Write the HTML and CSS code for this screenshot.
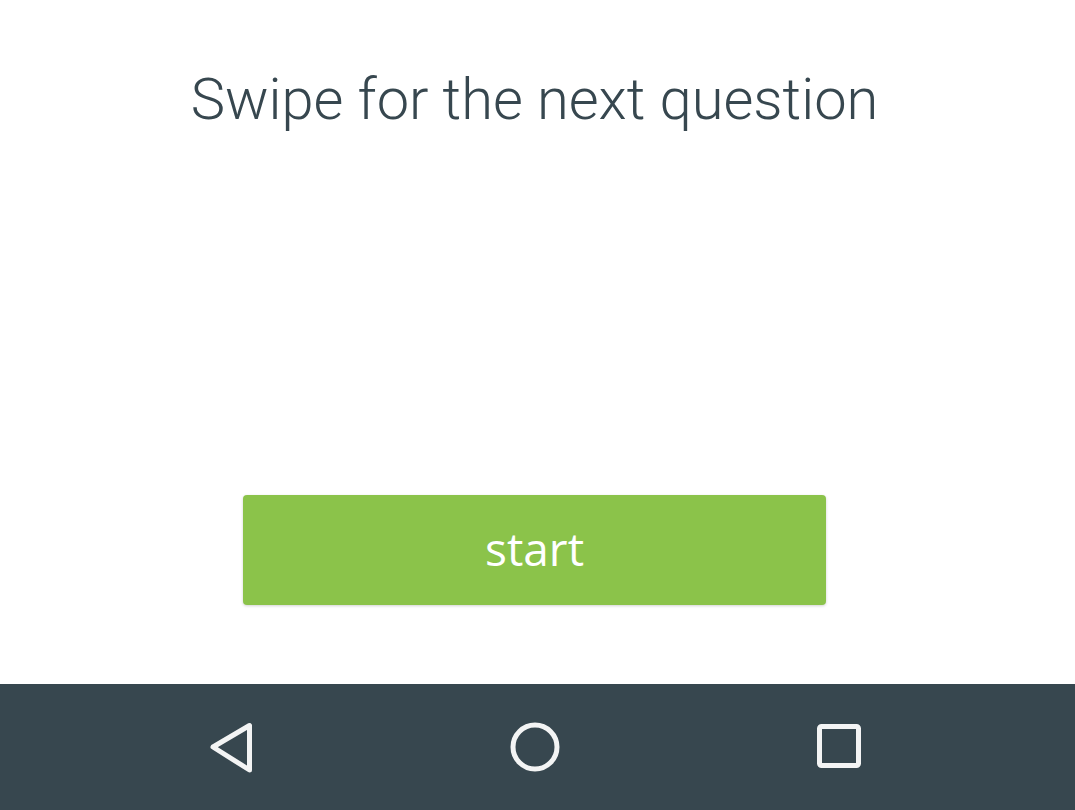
FILE: index.html
```html
<!DOCTYPE html>
<html>
<head>
<meta charset="utf-8">
<link rel="stylesheet" href="styles.css">
</head>
<body>
<div class="screen">
  <main class="content">
    <h1 class="title">Swipe for the next question</h1>
    <div class="spacer"></div>
    <button class="start">start</button>
  </main>
  <nav class="navbar">
    <svg class="nav-icon" width="60" height="60" viewBox="0 0 60 60">
      <path d="M48.5 8.5 L48.5 53 L12 30 Z" fill="none" stroke="#f3f4f4" stroke-width="5" stroke-linejoin="round"/>
    </svg>
    <svg class="nav-icon" width="60" height="60" viewBox="0 0 60 60">
      <circle cx="30" cy="30" r="22" fill="none" stroke="#f3f4f4" stroke-width="5"/>
    </svg>
    <svg class="nav-icon" width="60" height="60" viewBox="0 0 60 60">
      <rect x="10.5" y="9.5" width="39" height="39" rx="2" fill="none" stroke="#f3f4f4" stroke-width="5"/>
    </svg>
  </nav>
</div>
</body>
</html>
```

FILE: styles.css
```css
html, body {
  margin: 0;
  padding: 0;
  background: #ffffff;
}
.screen {
  width: 1075px;
  height: 810px;
  display: flex;
  flex-direction: column;
  overflow: hidden;
}
.content {
  flex: 1;
  display: flex;
  flex-direction: column;
  align-items: center;
  padding-top: 60px;
  padding-bottom: 79px;
}
.title {
  margin: 0;
  margin-left: -6px;
  font-family: Roboto, "Liberation Sans", sans-serif;
  font-weight: 300;
  font-size: 57.8px;
  line-height: 78px;
  color: #37474f;
  letter-spacing: 0;
}
.spacer {
  flex: 1;
}
.start {
  width: 583px;
  height: 110px;
  margin-left: -6px;
  border: none;
  border-radius: 4px;
  background: #8bc34a;
  color: #ffffff;
  font-family: "Open Sans", "Noto Sans", sans-serif;
  font-size: 46px;
  font-weight: 400;
  padding: 0 0 4px 0;
  box-shadow: 0 1px 3px rgba(0,0,0,0.18);
}
.navbar {
  height: 126px;
  background: #37474f;
  display: flex;
  align-items: center;
  justify-content: center;
  gap: 244px;
  padding-right: 5px;
}
.nav-icon {
  display: block;
}
```
